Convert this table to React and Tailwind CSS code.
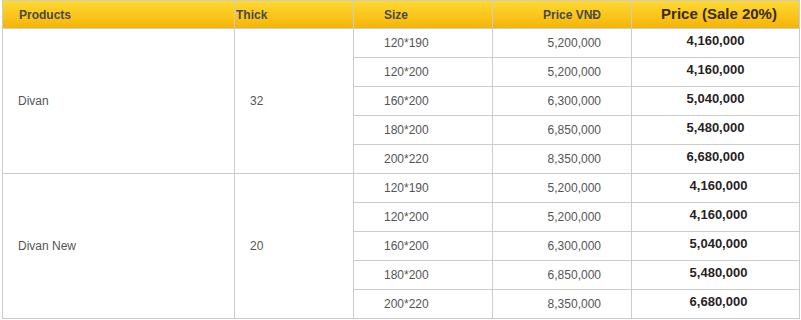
import React from "react";

const groups = [
  {
    name: "Divan",
    thick: "32",
    shift: false,
    rows: [
      ["120*190", "5,200,000", "4,160,000"],
      ["120*200", "5,200,000", "4,160,000"],
      ["160*200", "6,300,000", "5,040,000"],
      ["180*200", "6,850,000", "5,480,000"],
      ["200*220", "8,350,000", "6,680,000"],
    ],
  },
  {
    name: "Divan New",
    thick: "20",
    shift: true,
    rows: [
      ["120*190", "5,200,000", "4,160,000"],
      ["120*200", "5,200,000", "4,160,000"],
      ["160*200", "6,300,000", "5,040,000"],
      ["180*200", "6,850,000", "5,480,000"],
      ["200*220", "8,350,000", "6,680,000"],
    ],
  },
];

export default function App() {
  const font = { fontFamily: '"Liberation Sans", Arial, sans-serif' };
  return (
    <div className="bg-white w-[801px] h-[320px] overflow-hidden" style={font}>
      <table className="ml-[2px] border-collapse table-fixed w-[797px] text-[12px] text-[#555]">
        <colgroup>
          <col className="w-[232px]" />
          <col className="w-[119px]" />
          <col className="w-[139px]" />
          <col className="w-[139px]" />
          <col className="w-[168px]" />
        </colgroup>
        <thead>
          <tr className="h-[28px] bg-gradient-to-b from-[#ffd92f] to-[#f4b300]">
            <th className="border border-[#cccccc] p-0 pl-[16px] text-left font-bold text-[#4a4a4a]">Products</th>
            <th className="border border-[#cccccc] p-0 pl-[1px] text-left font-bold text-[#4a4a4a]">Thick</th>
            <th className="border border-[#cccccc] p-0 pl-[30px] text-left font-bold text-[#4a4a4a]">Size</th>
            <th className="border border-[#cccccc] p-0 pr-[30px] text-right font-bold text-[#4a4a4a]">Price VNĐ</th>
            <th className="border border-[#cccccc] p-0 pl-[7px] text-center font-bold text-[15px] text-[#3a2a18]">Price (Sale 20%)</th>
          </tr>
        </thead>
        <tbody>
          {groups.map((g) =>
            g.rows.map((r, i) => (
              <tr key={g.name + i} className="h-[29px]">
                {i === 0 && (
                  <td rowSpan={5} className="border border-[#cccccc] p-0 pl-[15px] align-middle">
                    {g.name}
                  </td>
                )}
                {i === 0 && (
                  <td rowSpan={5} className="border border-[#cccccc] p-0 pl-[15px] align-middle">
                    {g.thick}
                  </td>
                )}
                <td className="border border-[#cccccc] p-0 pl-[30px]">{r[0]}</td>
                <td className="border border-[#cccccc] p-0 pr-[30px] text-right">{r[1]}</td>
                <td
                  className={
                    "border border-[#cccccc] p-0 text-center font-bold text-[13px] text-[#2a1f1f] " +
                    (g.shift ? "pl-[6px]" : "pl-0")
                  }
                >
                  <span className="relative top-[-2px]">{r[2]}</span>
                </td>
              </tr>
            ))
          )}
        </tbody>
      </table>
    </div>
  );
}
